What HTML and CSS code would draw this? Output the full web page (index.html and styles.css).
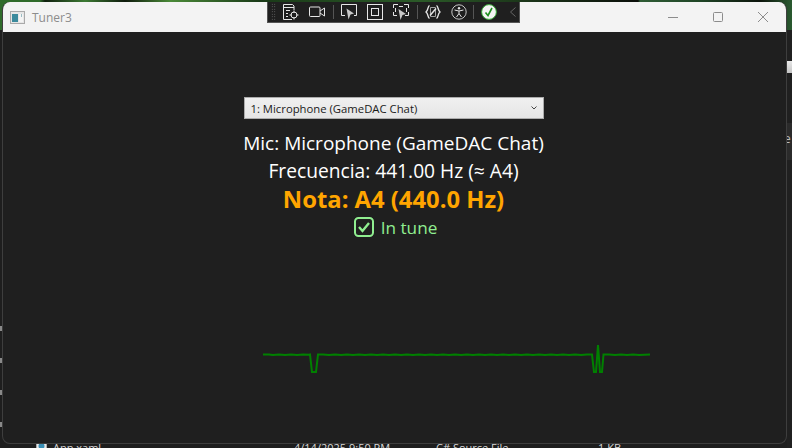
FILE: index.html
```html
<!DOCTYPE html>
<html>
<head>
    <title>Tuner3</title>
    <link rel="stylesheet" href="styles.css">
</head>
<body>
    <div class="desktop">
        <div class="wallpaper"></div>
        <div class="side-right">
            <div class="side-bar"></div>
            <div class="side-letter">e</div>
        </div>
        <div class="side-left">
            <span></span><span></span><span></span><span></span>
        </div>
        <div class="file-row">
            <svg class="file-icon" width="12" height="12" viewBox="0 0 12 12"><rect x="0.5" y="0.5" width="10" height="11" fill="#e8e8e8" stroke="#aaa"/><circle cx="5.5" cy="5" r="3" fill="#3a8fb5"/></svg>
            <span class="file-name">App.xaml</span>
            <span class="file-date">4/14/2025 9:50 PM</span>
            <span class="file-type">C# Source File</span>
            <span class="file-size">1 KB</span>
        </div>

        <div class="window">
            <div class="titlebar">
                <svg class="app-icon" width="15" height="13" viewBox="0 0 15 13">
                    <rect x="0.5" y="0.5" width="14" height="12" fill="#e6e6e6" stroke="#a9a9a9"/>
                    <rect x="2" y="3" width="6" height="8" fill="#3b8a9c"/>
                    <rect x="9" y="3" width="4" height="8" fill="#f4f4f4"/>
                    <rect x="11" y="3" width="1" height="3" fill="#9bbcc4"/>
                </svg>
                <span class="title">Tuner3</span>
                <div class="controls">
                    <svg width="10" height="10" viewBox="0 0 10 10"><path d="M0 5.5H10" stroke="#8c8c8c" fill="none"/></svg>
                    <svg width="10" height="10" viewBox="0 0 10 10"><rect x="0.5" y="0.5" width="9" height="9" rx="1" stroke="#8c8c8c" fill="none"/></svg>
                    <svg width="10" height="10" viewBox="0 0 10 10"><path d="M0 0L10 10M10 0L0 10" stroke="#8c8c8c" fill="none"/></svg>
                </div>
            </div>
            <div class="content">
                <div class="combo">
                    <span>1: Microphone (GameDAC Chat)</span>
                    <svg width="6" height="4" viewBox="0 0 6 4"><path d="M0.5 0.5L3 3L5.5 0.5" stroke="#444" fill="none"/></svg>
                </div>
                <div class="line mic">Mic: Microphone (GameDAC Chat)</div>
                <div class="line freq">Frecuencia: 441.00 Hz (≈ A4)</div>
                <div class="line note">Nota: A4 (440.0 Hz)</div>
                <div class="status">
                    <svg width="20" height="20" viewBox="0 0 20 20">
                        <rect x="1" y="1" width="18" height="18" rx="3.5" fill="none" stroke="#90ee90" stroke-width="2"/>
                        <path d="M5 10L8.5 14L15 6" fill="none" stroke="#90ee90" stroke-width="2.4"/>
                    </svg>
                    <span>In tune</span>
                </div>
                <svg class="wave" width="387" height="40" viewBox="0 0 387 40">
                    <polyline fill="none" stroke="#008000" stroke-width="2" points="0,14.5 6,14.5 10,15 16,14.5 22,15 28,14.5 34,15 40,14.5 46,14.8 47,14.5 49,32 53,32 55,14.5 60,14.5 66,15 72,14.5 78,15 84,14.5 90,15 96,14.5 102,15 108,14.5 114,15 120,14.5 126,15 132,14.5 138,15 144,14.5 150,15 156,14.5 162,15 168,14.5 174,15 180,14.5 186,15 192,14.5 198,15 204,14.5 210,15 216,14.5 222,15 228,14.5 234,15 240,14.5 246,15 252,14.5 258,15 264,14.5 270,15 276,14.5 282,15 288,14.5 294,15 300,14.5 306,15 312,14.5 318,15 324,14.5 329,14.5 331,32 333,32 335,5 337,32 339,32 340.5,14.5 346,14.5 352,15 358,14.5 364,15 370,14.5 376,15 387,14.5"/>
                </svg>
            </div>
        </div>

        <div class="toolbar">
            <div class="grip"></div>
            <svg class="tool" width="16" height="16" viewBox="0 0 16 16">
                <path d="M9 15.5H0.5V0.5H9.5L11 2V6" fill="none" stroke="#e6e6e6"/>
                <path d="M0.5 3.5H11M3 6.5H7M3 9.5H5M3 12.5H5" fill="none" stroke="#e6e6e6"/>
                <circle cx="11" cy="11" r="3" fill="none" stroke="#e6e6e6"/>
                <path d="M11 6.5V9M11 13V15.5M6.5 11H9M13 11H15.5" stroke="#e6e6e6"/>
            </svg>
            <svg class="tool wide" width="16" height="16" viewBox="0 0 16 16">
                <rect x="0.5" y="3" width="10.5" height="9.5" rx="1" fill="none" stroke="#e6e6e6"/>
                <path d="M11 7L15.5 4V12L11 9" fill="none" stroke="#e6e6e6"/>
            </svg>
            <div class="sep"></div>
            <svg class="tool" width="16" height="16" viewBox="0 0 16 16">
                <path d="M4 11.5H0.5V0.5H15.5V11.5H13" fill="none" stroke="#e6e6e6"/>
                <path d="M5.5 4.5L13 9.5L9.5 10.5L7.5 15.5Z" fill="#c8c8c8"/>
            </svg>
            <svg class="tool wide" width="16" height="16" viewBox="0 0 16 16">
                <rect x="0.5" y="0.5" width="15" height="15" fill="none" stroke="#e6e6e6"/>
                <rect x="4.5" y="4.5" width="7" height="7" fill="none" stroke="#e6e6e6"/>
            </svg>
            <svg class="tool wide" width="16" height="16" viewBox="0 0 16 16">
                <path d="M0.5 4V0.5H5M11 0.5H15.5V4M0.5 8V11.5H4M12 11.5H15.5V8M6 2.5H10M2.5 4V8M13.5 4V8" fill="none" stroke="#e6e6e6"/>
                <path d="M5.5 5L13 10L9.5 11L7.5 16Z" fill="#c8c8c8"/>
            </svg>
            <div class="sep"></div>
            <svg class="tool" width="16" height="16" viewBox="0 0 16 16">
                <path d="M4.5 1.5C2.5 2.5 3.5 6 1 8C3.5 10 2.5 13.5 4.5 14.5M11.5 1.5C13.5 2.5 12.5 6 15 8C12.5 10 13.5 13.5 11.5 14.5" fill="none" stroke="#e6e6e6" stroke-width="1.3"/>
                <path d="M5.5 3.5H10.5V12.500H5.5Z" fill="none" stroke="#a0a0a0"/>
                <path d="M5 11.5L11 4.5" fill="none" stroke="#e6e6e6" stroke-width="1.5"/>
            </svg>
            <svg class="tool wide" width="16" height="16" viewBox="0 0 16 16">
                <circle cx="8" cy="8" r="7.2" fill="none" stroke="#c8c8c8"/>
                <circle cx="8" cy="4.2" r="1.2" fill="#e6e6e6"/>
                <path d="M3.5 6L8 7L12.5 6M8 7V9.5L5.5 13M8 9.5L10.5 13" fill="none" stroke="#e6e6e6"/>
            </svg>
            <div class="sep narrow"></div>
            <svg class="tool" width="16" height="16" viewBox="0 0 16 16">
                <circle cx="8" cy="8" r="7.4" fill="#f4f4f4" stroke="#35a835"/>
                <path d="M4.5 8.5L7 11.5L11 4" fill="none" stroke="#1f8f1f" stroke-width="1.6"/>
            </svg>
            <svg class="chevron" width="6" height="10" viewBox="0 0 6 10"><path d="M5.5 0.5L0.5 5L5.5 9.5" fill="none" stroke="#666"/></svg>
        </div>
    </div>
</body>
</html>
```
FILE: styles.css
```css
html, body {
    margin: 0;
    padding: 0;
    background: #1c1c1c;
}
.desktop {
    position: relative;
    width: 792px;
    height: 448px;
    overflow: hidden;
    background: #1e1e1e;
    font-family: "Open Sans", sans-serif;
}
.wallpaper {
    position: absolute;
    left: 0;
    top: 0;
    width: 792px;
    height: 30px;
    background: linear-gradient(90deg, #2f6b2a 0, #2f6b2a 40px, #10200f 45px, #3c7a33 85px, #0e1a0c 125px, #4a8a38 170px, #1a3a18 260px, #2b5a28 420px, #0b0f0a 638px, #2f5c35 640px, #1f4526 700px, #0c140c 760px, #2a5a30 792px);
}
.side-right {
    position: absolute;
    left: 787px;
    top: 30px;
    width: 5px;
    height: 418px;
    background: #202020;
}
.side-bar {
    margin-top: 31px;
    height: 12px;
    background: linear-gradient(#e8e8e8, #c4c4c4);
}
.side-letter {
    margin-top: 50px;
    padding-top: 7px;
    height: 30px;
    font-size: 12px;
    color: #bbb;
    background: #2b2b2b;
    text-indent: -3px;
}
.side-left {
    position: absolute;
    left: 0;
    top: 326px;
    width: 2px;
    display: flex;
    flex-direction: column;
    gap: 27px;
}
.side-left span {
    display: block;
    height: 5px;
    background: #8a8a8a;
}
.file-row {
    position: absolute;
    left: 36px;
    top: 441px;
    display: flex;
    align-items: flex-start;
    font-size: 11px;
    line-height: 14px;
    color: #d8d8d8;
    white-space: nowrap;
}
.file-name {
    margin-left: 5px;
    width: 241px;
}
.file-date {
    width: 142px;
}
.file-type {
    width: 162px;
}
.window {
    position: absolute;
    left: 2px;
    top: 2px;
    width: 783px;
    height: 441px;
    border: 1px solid #3e3e3e;
    border-top: none;
    border-radius: 8px;
    overflow: hidden;
    background: #1f1f1f;
}
.titlebar {
    display: flex;
    align-items: center;
    height: 30px;
    padding-left: 7px;
    background: #f3f3f3;
}
.title {
    margin-left: 7px;
    font-size: 12px;
    color: #8c8c8c;
}
.controls {
    display: flex;
    gap: 35px;
    margin-left: auto;
    padding-right: 18px;
}
.content {
    display: flex;
    flex-direction: column;
    align-items: center;
    padding: 65px 2px 0 0;
}
.combo {
    display: flex;
    align-items: center;
    justify-content: space-between;
    box-sizing: border-box;
    width: 300px;
    height: 22px;
    padding: 0 6px;
    font-size: 11.3px;
    color: #1a1a1a;
    background: linear-gradient(#f0f0f0, #e5e5e5);
    border: 1px solid #acacac;
}
.line {
    text-align: center;
    white-space: nowrap;
}
.mic {
    margin-top: 11px;
    font-size: 19px;
    line-height: 27px;
    color: #fff;
}
.freq {
    font-size: 19.2px;
    line-height: 27px;
    color: #fff;
}
.note {
    font-size: 23.8px;
    font-weight: 700;
    line-height: 31px;
    color: #ffa500;
}
.status {
    display: flex;
    align-items: center;
    gap: 7px;
    height: 24px;
    padding-left: 4px;
    font-size: 17.2px;
    color: #90ee90;
}
.wave {
    align-self: flex-start;
    margin: 101px 0 0 260px;
}
.toolbar {
    position: absolute;
    left: 267px;
    top: 2px;
    box-sizing: border-box;
    width: 253px;
    height: 21px;
    display: flex;
    align-items: center;
    gap: 7px;
    padding-left: 3px;
    background: #1f1f1f;
    border: 1px solid #555;
    border-top: none;
}
.grip {
    width: 5px;
    height: 18px;
    background-image: radial-gradient(#777 40%, transparent 45%);
    background-size: 2.5px 2.5px;
}
.tool.wide {
    margin-left: 3px;
}
.sep {
    width: 1px;
    height: 14px;
    margin-left: 1px;
    background: #555;
}
.sep.narrow {
    margin-left: -1px;
}
.chevron {
    margin-left: 6px;
}
```
